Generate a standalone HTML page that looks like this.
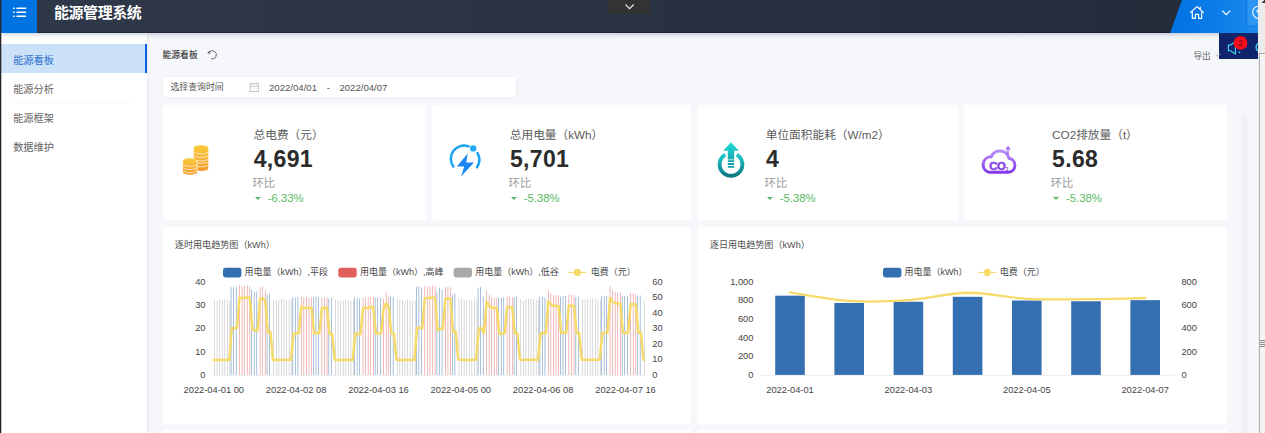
<!DOCTYPE html>
<html lang="zh-CN">
<head>
<meta charset="utf-8">
<title>能源管理系统</title>
<style>
*{box-sizing:border-box;margin:0;padding:0}
html,body{width:1265px;height:433px;overflow:hidden}
body{position:relative;background:#f6f7fb;font-family:"Liberation Sans","Noto Sans CJK SC",sans-serif;color:#333}
.abs{position:absolute}
#edge{left:0;top:0;width:2px;height:433px;background:linear-gradient(90deg,#262626 0,#262626 1px,rgba(38,38,38,.3) 1px,rgba(38,38,38,.3) 2px);z-index:20}
#hdr{left:0;top:0;width:1258px;height:33px;background:linear-gradient(90deg,#2e3849 0%,#2c3647 25%,#283242 50%,#232b39 100%);box-shadow:0 1px 5px rgba(50,60,100,.30),inset 0 -1px 0 rgba(18,24,36,.45);z-index:5}
#menu{z-index:6;left:1px;top:0;width:36px;height:33px;background:#0073e3}
#title{z-index:6;left:54px;top:1px;height:24px;line-height:24px;font-size:15px;font-weight:bold;color:#fff;white-space:nowrap;letter-spacing:-0.45px}
#tab{z-index:6;left:608.3px;top:0;width:42.2px;height:14.3px;background:#333}
#side{left:1px;top:33px;width:146px;height:400px;background:#fff;box-shadow:1px 0 3px rgba(0,0,0,.07)}
.mi{position:absolute;left:0;width:146px;height:28.3px;line-height:31.5px;padding-left:12.2px;font-size:10.2px;color:#646464;white-space:nowrap}
.mi.on{line-height:34.2px;background:#cbe1f8;color:#2b6fce;border-right:2.5px solid #0a62d8}
.card{position:absolute;background:#fff;border-radius:3px;box-shadow:0 0 2.5px rgba(255,255,255,.95)}
.ct{position:absolute;margin-left:0.5px;font-size:11.7px;color:#5c5c5c;white-space:nowrap;line-height:14px}
.cv{position:absolute;margin-left:0.3px;margin-top:-0.35px;font-size:23px;font-weight:bold;color:#2b2b2b;white-space:nowrap;line-height:24px;letter-spacing:0.35px}
.ch{position:absolute;font-size:11.3px;margin-left:-0.8px;color:#9a9a9a;white-space:nowrap;line-height:12px}
.cp{position:absolute;font-size:11.35px;margin-left:-1.1px;color:#5bb966;white-space:nowrap;line-height:12px}
.tri{position:absolute;margin-left:-0.8px;margin-top:0.9px;width:0;height:0;border-left:3.3px solid transparent;border-right:3.3px solid transparent;border-top:3.4px solid #5bb966}
.t9{position:absolute;font-size:9px;white-space:nowrap;line-height:12px;color:#444}
svg text{font-family:"Liberation Sans","Noto Sans CJK SC",sans-serif}
</style>
</head>
<body>
<div id="hdr" class="abs"></div>
<div id="menu" class="abs">
<svg width="36" height="33" viewBox="0 0 36 33"><g stroke="#fff" stroke-width="1.5" stroke-linecap="round"><path d="M16 8.2H24.6M16 12.2H24.6M16 16.2H24.6"/><path d="M12.6 8.2h.6M12.6 12.2h.6M12.6 16.2h.6"/></g></svg>
</div>
<div id="title" class="abs">能源管理系统</div>
<div id="tab" class="abs"><svg width="43" height="14" viewBox="0 0 43 14"><path d="M17.5 4.5L21.6 8.6L25.7 4.5" fill="none" stroke="#ececec" stroke-width="1.15"/></svg></div>

<!-- right header -->
<svg class="abs" style="left:1160px;top:0;z-index:6" width="98" height="33" viewBox="0 0 98 33">
<defs><linearGradient id="hb" x1="0" y1="0" x2="1" y2="0"><stop offset="0" stop-color="#0073e4"/><stop offset=".25" stop-color="#0576e5"/><stop offset="1" stop-color="#1b8bee"/></linearGradient></defs>
<path d="M22 0H98V33H10Z" fill="url(#hb)"/>
<path d="M30.6 12.4L37 6.6L43.4 12.4M32.3 11.4V18.3H35.4V14.4H38.6V18.3H41.7V11.4M40.2 7.2V9" fill="none" stroke="#fff" stroke-width="1.2" stroke-linejoin="round" stroke-linecap="round"/>
<path d="M62.2 10.6L66.2 14.6L70.2 10.6" fill="none" stroke="#fff" stroke-width="1.2"/>
<rect x="86" y="0" width="12" height="26.6" fill="#0b62c4" opacity=".28"/><rect x="87.3" y="0" width="10.7" height="25.3" fill="#2d96f2"/>
<circle cx="99" cy="12.3" r="6.3" fill="none" stroke="#e8f3ff" stroke-width="1.2"/>
<circle cx="98" cy="11" r="1.6" fill="#e8f3ff"/>
</svg>
<div class="abs" style="left:1219px;top:33px;width:39px;height:25.5px;background:#10246b"></div>
<svg class="abs" style="left:1219px;top:33px" width="39" height="26" viewBox="0 0 39 26">
<path d="M9.4 12.1H11.5L16.5 8.8V21.1L11.5 17.7H9.4Z" fill="none" stroke="#45d4ee" stroke-width="1.15" stroke-linejoin="round"/>
<path d="M19.6 18.6L21 20" stroke="#45d4ee" stroke-width="1.1" fill="none"/>
<circle cx="21.5" cy="9.9" r="6.9" fill="#fb0d1b"/>
<text x="21.5" y="13" font-size="8.8" fill="#6a1020" text-anchor="middle">2</text>
<path d="M39.6 10.2A4.4 4.4 0 0 0 39.6 18.2" fill="none" stroke="#45d4ee" stroke-width="1.4"/>
</svg>
<div class="t9" style="left:1193.5px;top:49.5px;color:#666;font-size:8.6px">导出</div>
<svg class="abs" style="left:1214px;top:52px" width="8" height="8"><path d="M1.6 1.8L4 4.4L6.4 1.8" fill="none" stroke="#aaa" stroke-width=".9"/></svg>

<!-- scrollbar -->
<div class="abs" style="left:1258px;top:0;width:7px;height:433px;background:#ececec;z-index:7"></div>
<div class="abs" style="left:1260px;top:54px;width:5px;height:379px;background:#f4f4f4;z-index:7"></div>
<div class="abs" style="left:1258.9px;top:53.5px;width:1.2px;height:380px;background:#b2b2b2;z-index:7"></div>
<div class="abs" style="left:1259.3px;top:53px;width:6px;height:1.1px;background:#adadad;z-index:7"></div>
<svg class="abs" style="left:1258px;top:0;z-index:7" width="7" height="6"><path d="M3.6 3L7 -0.6V3Z" fill="#333"/></svg>
<div class="abs" style="z-index:8;left:1260px;top:340px;width:5px;height:1px;background:#888;box-shadow:0 2px 0 #888,0 4px 0 #888,0 6px 0 #888"></div>
<!-- inner scrollbar hint -->
<div class="abs" style="left:1241px;top:114px;width:6.5px;height:320px;background:#eff1f5;border-radius:3px"></div>

<!-- sidebar -->
<div id="side" class="abs">
<div class="mi on" style="top:11.3px">能源看板</div>
<div class="mi" style="top:40.5px">能源分析</div>
<div class="mi" style="top:69.7px">能源框架</div>
<div class="mi" style="top:98.9px">数据维护</div>
</div>
<div class="abs" style="left:13px;top:102.3px;width:122px;height:1px;background:#f9f9f9"></div>
<div id="edge" class="abs"></div>

<!-- breadcrumb -->
<div class="t9" style="left:162.5px;top:49px;font-weight:500;color:#3c3c3c;font-size:8.8px">能源看板</div>
<svg class="abs" style="left:205px;top:48px" width="14" height="13" viewBox="0 0 14 13"><path d="M4.1 4.4A4 4 0 1 1 6.2 10.6" fill="none" stroke="#666" stroke-width="1"/><path d="M2.2 5.2L4.4 2.6L5.6 5.8Z" fill="#666"/></svg>

<!-- date picker -->
<div class="abs" style="left:163.3px;top:77.4px;width:353px;height:19.8px;background:#fff;border-radius:2px;box-shadow:0 0 3px rgba(120,130,160,.10)"></div>
<div class="t9" style="left:170.5px;top:81.3px;color:#555;font-size:8.9px">选择查询时间</div>
<svg class="abs" style="left:249px;top:82px" width="11" height="11" viewBox="0 0 11 11"><rect x="1" y="1.6" width="8.6" height="8" fill="none" stroke="#c4c4c4" stroke-width=".9"/><path d="M1 4.2H9.6M3.2 .6V2.6M7.4 .6V2.6" stroke="#c4c4c4" stroke-width=".9"/><path d="M2.6 6h1M4.8 6h1M7 6h1M2.6 8h1M4.8 8h1M7 8h1" stroke="#d4d4d4" stroke-width=".8"/></svg>
<div class="t9" style="left:269px;top:81.8px;color:#555;font-size:9.6px">2022/04/01</div>
<div class="t9" style="left:326.8px;top:81.5px;color:#555;font-size:9.6px">-</div>
<div class="t9" style="left:339.4px;top:81.8px;color:#555;font-size:9.6px">2022/04/07</div>

<!-- KPI cards -->
<div class="card" style="left:163px;top:105px;width:263px;height:115px"></div>
<div class="card" style="left:431.8px;top:105px;width:259px;height:115px"></div>
<div class="card" style="left:698px;top:105px;width:260px;height:115px"></div>
<div class="card" style="left:964px;top:105px;width:263px;height:115px"></div>

<!-- card 1 -->
<svg class="abs" style="left:180px;top:142px" width="34" height="36" viewBox="0 0 34 36">
<defs><linearGradient id="cg" x1="0" y1="0" x2="0" y2="1"><stop offset="0" stop-color="#f8cc3c"/><stop offset="1" stop-color="#f7982c"/></linearGradient></defs>
<g fill="url(#cg)">
<path d="M13.7 5.8a7.3 2.6 0 0 1 14.6 0V26.4a7.3 2.6 0 0 1-14.6 0Z"/>
<path d="M2.9 18.7a7.1 2.5 0 0 1 14.2 0V30.3a7.1 2.5 0 0 1-14.2 0Z"/>
</g>
<g fill="none" stroke="#fdf0c6" stroke-width=".85">
<path d="M13.7 9.4a7.3 2.6 0 0 0 14.6 0M13.7 12.9a7.3 2.6 0 0 0 14.6 0M13.7 16.4a7.3 2.6 0 0 0 14.6 0M17.1 20.8a7.3 2.6 0 0 0 11.2-.9M17.1 24.3a7.3 2.6 0 0 0 11.2-.9"/>
<path d="M2.9 21.9a7.1 2.5 0 0 0 14.2 0M2.9 25a7.1 2.5 0 0 0 14.2 0M2.9 28.1a7.1 2.5 0 0 0 14.2 0M17.1 18.7V30.3"/>
</g>
</svg>
<div class="ct" style="left:253px;top:128.1px">总电费（元）</div>
<div class="cv" style="left:253.4px;top:146.9px">4,691</div>
<div class="ch" style="left:253.2px;top:176.8px">环比</div>
<div class="tri" style="left:255.8px;top:196.3px"></div>
<div class="cp" style="left:268.8px;top:191.8px">-6.33%</div>

<!-- card 2 -->
<svg class="abs" style="left:446px;top:140px" width="38" height="40" viewBox="0 0 38 40">
<path d="M7.4 26.6A13.2 13.2 0 0 1 22.6 6.4" fill="none" stroke="#1ba1f2" stroke-width="2.5" stroke-linecap="round"/>
<path d="M31.4 13A13.2 13.2 0 0 1 31 27.2" fill="none" stroke="#1ba1f2" stroke-width="2.5" stroke-linecap="round"/>
<circle cx="27.2" cy="8.4" r="3.2" fill="#20aaf3"/>
<path d="M21.8 13.6L10.8 26.4H18.2L15 36.6L28 22.4H20.2Z" fill="#1a86ee"/>
</svg>
<div class="ct" style="left:509.3px;top:128.1px">总用电量（kWh）</div>
<div class="cv" style="left:509.6px;top:146.9px">5,701</div>
<div class="ch" style="left:509.4px;top:176.8px">环比</div>
<div class="tri" style="left:512px;top:196.3px"></div>
<div class="cp" style="left:524.8px;top:191.8px">-5.38%</div>

<!-- card 3 -->
<svg class="abs" style="left:714px;top:140px" width="36" height="40" viewBox="0 0 36 40">
<defs><linearGradient id="pg" x1="0" y1="0" x2="0" y2="1"><stop offset="0" stop-color="#1fc9cc"/><stop offset="1" stop-color="#0c7a84"/></linearGradient>
<linearGradient id="pa" x1="0" y1="0" x2="0" y2="1"><stop offset="0" stop-color="#22dcdc"/><stop offset="1" stop-color="#15aab0"/></linearGradient></defs>
<path d="M11.2 14.6A11.4 11.4 0 1 0 22.8 14.6" fill="none" stroke="url(#pg)" stroke-width="3.9" stroke-linecap="butt"/>
<path d="M17 2.2L24.8 10.8H20.2V19.6H13.8V10.8H9.2Z" fill="url(#pa)"/>
<path d="M13.8 21.2H20.2M13.8 24H20.2M13.8 26.8H20.2" stroke="#12a0a6" stroke-width="1.8"/>
</svg>
<div class="ct" style="left:765.2px;top:128.1px">单位面积能耗（W/m2）</div>
<div class="cv" style="left:765.8px;top:146.9px">4</div>
<div class="ch" style="left:765.4px;top:176.8px">环比</div>
<div class="tri" style="left:768px;top:196.3px"></div>
<div class="cp" style="left:780.8px;top:191.8px">-5.38%</div>

<!-- card 4 -->
<svg class="abs" style="left:978px;top:143.4px" width="42" height="34" viewBox="0 0 42 34">
<defs><linearGradient id="vg" x1="0" y1="0" x2="0" y2="1"><stop offset="0" stop-color="#b88cf9"/><stop offset="1" stop-color="#8638ef"/></linearGradient></defs>
<path d="M10.6 29.2H30.4A7 7 0 0 0 31 15.3A9.4 9.4 0 0 0 13.2 13.8A7.9 7.9 0 0 0 10.6 29.2Z" fill="#fff" stroke="url(#vg)" stroke-width="3" stroke-linejoin="round"/>
<text x="19.4" y="26.6" font-size="11.4" font-weight="bold" fill="#8a44ee" stroke="#8a44ee" stroke-width=".5" text-anchor="middle" letter-spacing="-.5">CO</text>
<text x="29" y="27.6" font-size="4.6" font-weight="bold" fill="#8a44ee" text-anchor="middle">2</text>
<path d="M30 12V4.6M28 6.6L30 4L32 6.6" fill="none" stroke="#a56cf5" stroke-width="1.4"/>
</svg>
<div class="ct" style="left:1051.6px;top:128.1px">CO2排放量（t）</div>
<div class="cv" style="left:1051.8px;top:146.9px">5.68</div>
<div class="ch" style="left:1051.6px;top:176.8px">环比</div>
<div class="tri" style="left:1054.2px;top:196.3px"></div>
<div class="cp" style="left:1067px;top:191.8px">-5.38%</div>

<!-- chart cards -->
<div class="card" style="left:163px;top:227px;width:527.8px;height:197px"></div>
<div class="card" style="left:698px;top:227px;width:529px;height:197px"></div>
<div class="card" style="left:163px;top:430px;width:527.8px;height:20px"></div>
<div class="card" style="left:698px;top:430px;width:529px;height:20px"></div>
<div class="t9" style="left:174.8px;top:239px;color:#505050;font-size:9.1px">逐时用电趋势图（kWh）</div>
<div class="t9" style="left:709.8px;top:239px;color:#505050;font-size:9.1px">逐日用电趋势图（kWh）</div>

<svg class="abs" style="left:0;top:0;pointer-events:none" width="1265" height="433" viewBox="0 0 1265 433">
<!-- legends -->
<g font-size="9" fill="#484848">
<rect x="223" y="267.8" width="18.4" height="9.6" rx="2.4" fill="#346fb2"/><text x="244.6" y="275.3">用电量（kWh）,平段</text>
<rect x="338.3" y="267.8" width="18.4" height="9.6" rx="2.4" fill="#e2605c"/><text x="359.9" y="275.3">用电量（kWh）,高峰</text>
<rect x="453.6" y="267.8" width="18.4" height="9.6" rx="2.4" fill="#a9a9a9"/><text x="475.2" y="275.3">用电量（kWh）,低谷</text>
<path d="M568.2 272.4H586.4" stroke="#f6db6b" stroke-width="1.1"/><circle cx="577.4" cy="272.4" r="3.6" fill="#f6db6b"/><text x="590.8" y="275.3">电费（元）</text>
<rect x="883" y="267.8" width="18.4" height="9.6" rx="2.4" fill="#346fb2"/><text x="904.6" y="275.3">用电量（kWh）</text>
<path d="M978.2 272.4H996.4" stroke="#f6db6b" stroke-width="1.1"/><circle cx="987.4" cy="272.4" r="3.6" fill="#f6db6b"/><text x="999.8" y="275.3">电费（元）</text>
</g>
<!-- axis lines -->
<path d="M212.5 375.3H644.8" stroke="#e6e6e6" stroke-width=".8"/>
<path d="M760.4 375.3H1174.8" stroke="#e6e6e6" stroke-width=".8"/>
<g opacity=".72">
<rect x="214.23" y="300.09" width="0.6" height="74.81" fill="#a9a9a9"/>
<rect x="216.80" y="300.54" width="0.6" height="74.36" fill="#a9a9a9"/>
<rect x="219.37" y="299.25" width="0.6" height="75.65" fill="#a9a9a9"/>
<rect x="221.95" y="300.74" width="0.6" height="74.16" fill="#a9a9a9"/>
<rect x="224.52" y="299.55" width="0.6" height="75.35" fill="#a9a9a9"/>
<rect x="227.09" y="299.99" width="0.6" height="74.91" fill="#a9a9a9"/>
<rect x="229.66" y="300.77" width="0.6" height="74.13" fill="#a9a9a9"/>
<rect x="230.76" y="287.19" width="0.6" height="87.71" fill="#346fb2"/>
<rect x="233.33" y="287.25" width="0.6" height="87.65" fill="#346fb2"/>
<rect x="235.90" y="286.81" width="0.6" height="88.09" fill="#346fb2"/>
<rect x="239.22" y="285.45" width="0.6" height="89.45" fill="#e2605c"/>
<rect x="241.79" y="286.34" width="0.6" height="88.56" fill="#e2605c"/>
<rect x="244.36" y="285.78" width="0.6" height="89.12" fill="#e2605c"/>
<rect x="246.94" y="285.70" width="0.6" height="89.20" fill="#e2605c"/>
<rect x="249.51" y="286.07" width="0.6" height="88.83" fill="#e2605c"/>
<rect x="251.34" y="289.42" width="0.6" height="85.48" fill="#346fb2"/>
<rect x="253.91" y="291.46" width="0.6" height="83.44" fill="#346fb2"/>
<rect x="256.49" y="291.47" width="0.6" height="83.43" fill="#346fb2"/>
<rect x="259.80" y="287.14" width="0.6" height="87.76" fill="#e2605c"/>
<rect x="262.37" y="286.26" width="0.6" height="88.64" fill="#e2605c"/>
<rect x="264.95" y="289.86" width="0.6" height="85.04" fill="#e2605c"/>
<rect x="266.78" y="294.72" width="0.6" height="80.18" fill="#346fb2"/>
<rect x="269.35" y="294.08" width="0.6" height="80.82" fill="#346fb2"/>
<rect x="273.41" y="300.18" width="0.6" height="74.72" fill="#a9a9a9"/>
<rect x="275.98" y="299.76" width="0.6" height="75.14" fill="#a9a9a9"/>
<rect x="278.55" y="300.15" width="0.6" height="74.75" fill="#a9a9a9"/>
<rect x="281.12" y="298.89" width="0.6" height="76.01" fill="#a9a9a9"/>
<rect x="283.70" y="299.13" width="0.6" height="75.77" fill="#a9a9a9"/>
<rect x="286.27" y="300.30" width="0.6" height="74.60" fill="#a9a9a9"/>
<rect x="288.84" y="299.45" width="0.6" height="75.45" fill="#a9a9a9"/>
<rect x="291.42" y="299.58" width="0.6" height="75.32" fill="#a9a9a9"/>
<rect x="292.51" y="297.38" width="0.6" height="77.52" fill="#346fb2"/>
<rect x="295.08" y="297.64" width="0.6" height="77.26" fill="#346fb2"/>
<rect x="297.66" y="296.83" width="0.6" height="78.07" fill="#346fb2"/>
<rect x="300.97" y="296.61" width="0.6" height="78.29" fill="#e2605c"/>
<rect x="303.54" y="297.60" width="0.6" height="77.30" fill="#e2605c"/>
<rect x="306.11" y="297.20" width="0.6" height="77.70" fill="#e2605c"/>
<rect x="308.69" y="298.47" width="0.6" height="76.43" fill="#e2605c"/>
<rect x="311.26" y="297.12" width="0.6" height="77.78" fill="#e2605c"/>
<rect x="313.09" y="297.24" width="0.6" height="77.66" fill="#346fb2"/>
<rect x="315.67" y="296.51" width="0.6" height="78.39" fill="#346fb2"/>
<rect x="318.24" y="296.87" width="0.6" height="78.03" fill="#346fb2"/>
<rect x="321.55" y="298.00" width="0.6" height="76.90" fill="#e2605c"/>
<rect x="324.13" y="297.78" width="0.6" height="77.12" fill="#e2605c"/>
<rect x="326.70" y="297.19" width="0.6" height="77.71" fill="#e2605c"/>
<rect x="328.53" y="298.55" width="0.6" height="76.35" fill="#346fb2"/>
<rect x="331.10" y="297.62" width="0.6" height="77.28" fill="#346fb2"/>
<rect x="335.16" y="299.40" width="0.6" height="75.50" fill="#a9a9a9"/>
<rect x="337.73" y="300.49" width="0.6" height="74.41" fill="#a9a9a9"/>
<rect x="340.30" y="300.62" width="0.6" height="74.28" fill="#a9a9a9"/>
<rect x="342.88" y="300.77" width="0.6" height="74.13" fill="#a9a9a9"/>
<rect x="345.45" y="298.95" width="0.6" height="75.95" fill="#a9a9a9"/>
<rect x="348.02" y="300.59" width="0.6" height="74.31" fill="#a9a9a9"/>
<rect x="350.60" y="300.29" width="0.6" height="74.61" fill="#a9a9a9"/>
<rect x="353.17" y="299.92" width="0.6" height="74.98" fill="#a9a9a9"/>
<rect x="354.26" y="297.36" width="0.6" height="77.54" fill="#346fb2"/>
<rect x="356.83" y="298.04" width="0.6" height="76.86" fill="#346fb2"/>
<rect x="359.41" y="298.58" width="0.6" height="76.32" fill="#346fb2"/>
<rect x="362.72" y="297.71" width="0.6" height="77.19" fill="#e2605c"/>
<rect x="365.29" y="297.82" width="0.6" height="77.08" fill="#e2605c"/>
<rect x="367.87" y="297.40" width="0.6" height="77.50" fill="#e2605c"/>
<rect x="370.44" y="296.59" width="0.6" height="78.31" fill="#e2605c"/>
<rect x="373.01" y="297.14" width="0.6" height="77.76" fill="#e2605c"/>
<rect x="374.85" y="297.51" width="0.6" height="77.39" fill="#346fb2"/>
<rect x="377.42" y="297.30" width="0.6" height="77.60" fill="#346fb2"/>
<rect x="379.99" y="297.17" width="0.6" height="77.73" fill="#346fb2"/>
<rect x="383.30" y="298.48" width="0.6" height="76.42" fill="#e2605c"/>
<rect x="385.88" y="292.42" width="0.6" height="82.48" fill="#e2605c"/>
<rect x="388.45" y="296.96" width="0.6" height="77.94" fill="#e2605c"/>
<rect x="390.28" y="296.76" width="0.6" height="78.14" fill="#346fb2"/>
<rect x="392.86" y="296.92" width="0.6" height="77.98" fill="#346fb2"/>
<rect x="396.91" y="299.68" width="0.6" height="75.22" fill="#a9a9a9"/>
<rect x="399.48" y="299.92" width="0.6" height="74.98" fill="#a9a9a9"/>
<rect x="402.06" y="299.90" width="0.6" height="75.00" fill="#a9a9a9"/>
<rect x="404.63" y="300.66" width="0.6" height="74.24" fill="#a9a9a9"/>
<rect x="407.20" y="299.30" width="0.6" height="75.60" fill="#a9a9a9"/>
<rect x="409.77" y="300.76" width="0.6" height="74.14" fill="#a9a9a9"/>
<rect x="412.35" y="300.75" width="0.6" height="74.15" fill="#a9a9a9"/>
<rect x="414.92" y="300.39" width="0.6" height="74.51" fill="#a9a9a9"/>
<rect x="416.01" y="286.44" width="0.6" height="88.46" fill="#346fb2"/>
<rect x="418.59" y="286.40" width="0.6" height="88.50" fill="#346fb2"/>
<rect x="421.16" y="287.32" width="0.6" height="87.58" fill="#346fb2"/>
<rect x="424.47" y="286.45" width="0.6" height="88.45" fill="#e2605c"/>
<rect x="427.05" y="286.11" width="0.6" height="88.79" fill="#e2605c"/>
<rect x="429.62" y="286.22" width="0.6" height="88.68" fill="#e2605c"/>
<rect x="432.19" y="285.43" width="0.6" height="89.47" fill="#e2605c"/>
<rect x="434.76" y="286.37" width="0.6" height="88.53" fill="#e2605c"/>
<rect x="436.60" y="291.62" width="0.6" height="83.28" fill="#346fb2"/>
<rect x="439.17" y="287.73" width="0.6" height="87.17" fill="#346fb2"/>
<rect x="441.74" y="289.50" width="0.6" height="85.40" fill="#346fb2"/>
<rect x="445.06" y="287.25" width="0.6" height="87.65" fill="#e2605c"/>
<rect x="447.63" y="286.51" width="0.6" height="88.39" fill="#e2605c"/>
<rect x="450.20" y="287.47" width="0.6" height="87.43" fill="#e2605c"/>
<rect x="452.04" y="294.22" width="0.6" height="80.68" fill="#346fb2"/>
<rect x="454.61" y="293.17" width="0.6" height="81.73" fill="#346fb2"/>
<rect x="458.66" y="298.38" width="0.6" height="76.52" fill="#a9a9a9"/>
<rect x="461.23" y="298.71" width="0.6" height="76.19" fill="#a9a9a9"/>
<rect x="463.81" y="299.14" width="0.6" height="75.76" fill="#a9a9a9"/>
<rect x="466.38" y="300.25" width="0.6" height="74.65" fill="#a9a9a9"/>
<rect x="468.95" y="299.98" width="0.6" height="74.92" fill="#a9a9a9"/>
<rect x="471.53" y="300.49" width="0.6" height="74.41" fill="#a9a9a9"/>
<rect x="474.10" y="298.94" width="0.6" height="75.96" fill="#a9a9a9"/>
<rect x="476.67" y="299.56" width="0.6" height="75.34" fill="#a9a9a9"/>
<rect x="477.77" y="287.76" width="0.6" height="87.14" fill="#346fb2"/>
<rect x="480.34" y="286.83" width="0.6" height="88.07" fill="#346fb2"/>
<rect x="482.91" y="296.50" width="0.6" height="78.40" fill="#346fb2"/>
<rect x="486.22" y="290.55" width="0.6" height="84.35" fill="#e2605c"/>
<rect x="488.80" y="294.98" width="0.6" height="79.92" fill="#e2605c"/>
<rect x="491.37" y="297.56" width="0.6" height="77.34" fill="#e2605c"/>
<rect x="493.94" y="297.83" width="0.6" height="77.07" fill="#e2605c"/>
<rect x="496.52" y="297.82" width="0.6" height="77.08" fill="#e2605c"/>
<rect x="498.35" y="297.88" width="0.6" height="77.02" fill="#346fb2"/>
<rect x="500.92" y="297.86" width="0.6" height="77.04" fill="#346fb2"/>
<rect x="503.50" y="297.08" width="0.6" height="77.82" fill="#346fb2"/>
<rect x="506.81" y="296.56" width="0.6" height="78.34" fill="#e2605c"/>
<rect x="509.38" y="296.68" width="0.6" height="78.22" fill="#e2605c"/>
<rect x="511.95" y="297.35" width="0.6" height="77.55" fill="#e2605c"/>
<rect x="513.79" y="297.03" width="0.6" height="77.87" fill="#346fb2"/>
<rect x="516.36" y="296.75" width="0.6" height="78.15" fill="#346fb2"/>
<rect x="520.41" y="299.15" width="0.6" height="75.75" fill="#a9a9a9"/>
<rect x="522.99" y="300.71" width="0.6" height="74.19" fill="#a9a9a9"/>
<rect x="525.56" y="299.23" width="0.6" height="75.67" fill="#a9a9a9"/>
<rect x="528.13" y="298.59" width="0.6" height="76.31" fill="#a9a9a9"/>
<rect x="530.71" y="298.92" width="0.6" height="75.98" fill="#a9a9a9"/>
<rect x="533.28" y="299.00" width="0.6" height="75.90" fill="#a9a9a9"/>
<rect x="535.85" y="299.70" width="0.6" height="75.20" fill="#a9a9a9"/>
<rect x="538.42" y="300.46" width="0.6" height="74.44" fill="#a9a9a9"/>
<rect x="539.52" y="296.89" width="0.6" height="78.01" fill="#346fb2"/>
<rect x="542.09" y="296.52" width="0.6" height="78.38" fill="#346fb2"/>
<rect x="544.66" y="297.30" width="0.6" height="77.60" fill="#346fb2"/>
<rect x="547.98" y="290.09" width="0.6" height="84.81" fill="#e2605c"/>
<rect x="550.55" y="293.35" width="0.6" height="81.55" fill="#e2605c"/>
<rect x="553.12" y="295.21" width="0.6" height="79.69" fill="#e2605c"/>
<rect x="555.70" y="295.06" width="0.6" height="79.84" fill="#e2605c"/>
<rect x="558.27" y="295.32" width="0.6" height="79.58" fill="#e2605c"/>
<rect x="560.10" y="296.74" width="0.6" height="78.16" fill="#346fb2"/>
<rect x="562.67" y="295.92" width="0.6" height="78.98" fill="#346fb2"/>
<rect x="565.25" y="296.00" width="0.6" height="78.90" fill="#346fb2"/>
<rect x="568.56" y="294.60" width="0.6" height="80.30" fill="#e2605c"/>
<rect x="571.13" y="295.12" width="0.6" height="79.78" fill="#e2605c"/>
<rect x="573.71" y="295.02" width="0.6" height="79.88" fill="#e2605c"/>
<rect x="575.54" y="297.10" width="0.6" height="77.80" fill="#346fb2"/>
<rect x="578.11" y="296.45" width="0.6" height="78.45" fill="#346fb2"/>
<rect x="582.17" y="299.24" width="0.6" height="75.66" fill="#a9a9a9"/>
<rect x="584.74" y="299.43" width="0.6" height="75.47" fill="#a9a9a9"/>
<rect x="587.31" y="298.60" width="0.6" height="76.30" fill="#a9a9a9"/>
<rect x="589.88" y="299.84" width="0.6" height="75.06" fill="#a9a9a9"/>
<rect x="592.46" y="298.57" width="0.6" height="76.33" fill="#a9a9a9"/>
<rect x="595.03" y="299.64" width="0.6" height="75.26" fill="#a9a9a9"/>
<rect x="597.60" y="299.56" width="0.6" height="75.34" fill="#a9a9a9"/>
<rect x="600.18" y="299.58" width="0.6" height="75.32" fill="#a9a9a9"/>
<rect x="601.27" y="295.64" width="0.6" height="79.26" fill="#346fb2"/>
<rect x="603.84" y="296.13" width="0.6" height="78.77" fill="#346fb2"/>
<rect x="606.42" y="296.03" width="0.6" height="78.87" fill="#346fb2"/>
<rect x="609.73" y="285.89" width="0.6" height="89.01" fill="#e2605c"/>
<rect x="612.30" y="290.55" width="0.6" height="84.35" fill="#e2605c"/>
<rect x="614.87" y="292.01" width="0.6" height="82.89" fill="#e2605c"/>
<rect x="617.45" y="292.64" width="0.6" height="82.26" fill="#e2605c"/>
<rect x="620.02" y="292.36" width="0.6" height="82.54" fill="#e2605c"/>
<rect x="621.85" y="296.12" width="0.6" height="78.78" fill="#346fb2"/>
<rect x="624.43" y="295.79" width="0.6" height="79.11" fill="#346fb2"/>
<rect x="627.00" y="296.23" width="0.6" height="78.67" fill="#346fb2"/>
<rect x="630.31" y="293.17" width="0.6" height="81.73" fill="#e2605c"/>
<rect x="632.89" y="293.27" width="0.6" height="81.63" fill="#e2605c"/>
<rect x="635.46" y="293.92" width="0.6" height="80.98" fill="#e2605c"/>
<rect x="637.29" y="295.77" width="0.6" height="79.13" fill="#346fb2"/>
<rect x="639.86" y="295.44" width="0.6" height="79.46" fill="#346fb2"/>
<rect x="643.92" y="300.21" width="0.6" height="74.69" fill="#a9a9a9"/>
</g>
<path d="M213.79,359.94 L216.36,360.03 L218.93,359.77 L221.51,360.07 L224.08,359.83 L226.65,359.92 L229.22,360.07 L231.80,328.12 L234.37,328.15 L236.94,327.92 L239.52,297.38 L242.09,298.15 L244.66,297.66 L247.24,297.59 L249.81,297.92 L252.38,329.31 L254.95,330.40 L257.53,330.40 L260.10,298.84 L262.67,298.08 L265.25,301.19 L267.82,332.13 L270.39,331.80 L272.97,359.96 L275.54,359.87 L278.11,359.95 L280.68,359.70 L283.26,359.75 L285.83,359.98 L288.40,359.81 L290.98,359.84 L293.55,333.55 L296.12,333.69 L298.70,333.26 L301.27,307.05 L303.84,307.91 L306.41,307.56 L308.99,308.66 L311.56,307.49 L314.13,333.48 L316.71,333.09 L319.28,333.28 L321.85,308.25 L324.43,308.07 L327.00,307.55 L329.57,334.18 L332.14,333.69 L334.72,359.80 L337.29,360.02 L339.86,360.04 L342.44,360.07 L345.01,359.71 L347.58,360.04 L350.16,359.98 L352.73,359.90 L355.30,333.54 L357.87,333.91 L360.45,334.20 L363.02,308.01 L365.59,308.10 L368.17,307.74 L370.74,307.03 L373.31,307.51 L375.89,333.63 L378.46,333.51 L381.03,333.45 L383.60,308.67 L386.18,303.42 L388.75,307.35 L391.32,333.22 L393.90,333.31 L396.47,359.86 L399.04,359.90 L401.62,359.90 L404.19,360.05 L406.76,359.78 L409.33,360.07 L411.91,360.07 L414.48,360.00 L417.05,327.72 L419.63,327.70 L422.20,328.19 L424.77,298.24 L427.35,297.95 L429.92,298.05 L432.49,297.36 L435.06,298.17 L437.64,330.49 L440.21,328.41 L442.78,329.36 L445.36,298.94 L447.93,298.30 L450.50,299.13 L453.08,331.87 L455.65,331.31 L458.22,359.60 L460.79,359.66 L463.37,359.75 L465.94,359.97 L468.51,359.92 L471.09,360.02 L473.66,359.71 L476.23,359.83 L478.81,328.42 L481.38,327.93 L483.95,333.08 L486.52,301.80 L489.10,305.64 L491.67,307.87 L494.24,308.11 L496.82,308.10 L499.39,333.82 L501.96,333.81 L504.54,333.40 L507.11,307.01 L509.68,307.11 L512.25,307.69 L514.83,333.37 L517.40,333.22 L519.97,359.75 L522.55,360.06 L525.12,359.77 L527.69,359.64 L530.27,359.70 L532.84,359.72 L535.41,359.86 L537.98,360.01 L540.56,333.30 L543.13,333.10 L545.70,333.51 L548.28,301.40 L550.85,304.22 L553.42,305.83 L556.00,305.70 L558.57,305.93 L561.14,333.21 L563.71,332.78 L566.29,332.82 L568.86,305.31 L571.43,305.75 L574.01,305.67 L576.58,333.40 L579.15,333.06 L581.73,359.77 L584.30,359.81 L586.87,359.64 L589.44,359.89 L592.02,359.63 L594.59,359.85 L597.16,359.83 L599.74,359.84 L602.31,332.63 L604.88,332.89 L607.46,332.84 L610.03,297.76 L612.60,301.80 L615.17,303.06 L617.75,303.61 L620.32,303.37 L622.89,332.89 L625.47,332.71 L628.04,332.95 L630.61,304.07 L633.19,304.15 L635.76,304.72 L638.33,332.70 L640.90,332.52 L643.48,359.96" fill="none" stroke="#f6db6b" stroke-width="2.5" stroke-linejoin="round" stroke-linecap="round"/>
<rect x="775.20" y="295.68" width="29.60" height="79.22" fill="#346fb2"/>
<rect x="834.40" y="302.95" width="29.60" height="71.95" fill="#346fb2"/>
<rect x="893.60" y="301.74" width="29.60" height="73.16" fill="#346fb2"/>
<rect x="952.80" y="296.80" width="29.60" height="78.10" fill="#346fb2"/>
<rect x="1012.00" y="300.53" width="29.60" height="74.37" fill="#346fb2"/>
<rect x="1071.20" y="301.27" width="29.60" height="73.63" fill="#346fb2"/>
<rect x="1130.40" y="300.15" width="29.60" height="74.75" fill="#346fb2"/>
<path d="M790.00,292.42 C799.87,293.84 829.47,299.64 849.20,300.92 C868.93,302.20 888.67,301.47 908.40,300.11 C928.13,298.75 947.87,292.98 967.60,292.77 C987.33,292.55 1007.07,297.76 1026.80,298.83 C1046.53,299.89 1066.27,299.31 1086.00,299.17 C1105.73,299.04 1135.33,298.20 1145.20,298.01" fill="none" stroke="#f6db6b" stroke-width="2.3" stroke-linecap="round"/>
<g font-size="9.3" fill="#444">
<text x="205.5" y="377.8" text-anchor="end">0</text>
<text x="205.5" y="354.5" text-anchor="end">10</text>
<text x="205.5" y="331.2" text-anchor="end">20</text>
<text x="205.5" y="307.9" text-anchor="end">30</text>
<text x="205.5" y="284.6" text-anchor="end">40</text>
<text x="652.3" y="377.8">0</text>
<text x="652.3" y="362.3">10</text>
<text x="652.3" y="346.7">20</text>
<text x="652.3" y="331.2">30</text>
<text x="652.3" y="315.7">40</text>
<text x="652.3" y="300.1">50</text>
<text x="652.3" y="284.6">60</text>
<text x="213.8" y="393.4" text-anchor="middle">2022-04-01 00</text>
<text x="296.1" y="393.4" text-anchor="middle">2022-04-02 08</text>
<text x="378.5" y="393.4" text-anchor="middle">2022-04-03 16</text>
<text x="460.8" y="393.4" text-anchor="middle">2022-04-05 00</text>
<text x="543.1" y="393.4" text-anchor="middle">2022-04-06 08</text>
<text x="625.5" y="393.4" text-anchor="middle">2022-04-07 16</text>
<text x="753.4" y="377.8" text-anchor="end">0</text>
<text x="753.4" y="359.2" text-anchor="end">200</text>
<text x="753.4" y="340.5" text-anchor="end">400</text>
<text x="753.4" y="321.9" text-anchor="end">600</text>
<text x="753.4" y="303.2" text-anchor="end">800</text>
<text x="753.4" y="284.6" text-anchor="end">1,000</text>
<text x="1181.4" y="377.8">0</text>
<text x="1181.4" y="354.5">200</text>
<text x="1181.4" y="331.2">400</text>
<text x="1181.4" y="307.9">600</text>
<text x="1181.4" y="284.6">800</text>
<text x="790.0" y="393.4" text-anchor="middle">2022-04-01</text>
<text x="908.4" y="393.4" text-anchor="middle">2022-04-03</text>
<text x="1026.8" y="393.4" text-anchor="middle">2022-04-05</text>
<text x="1145.2" y="393.4" text-anchor="middle">2022-04-07</text>
</g>
</svg>
</body>
</html>
